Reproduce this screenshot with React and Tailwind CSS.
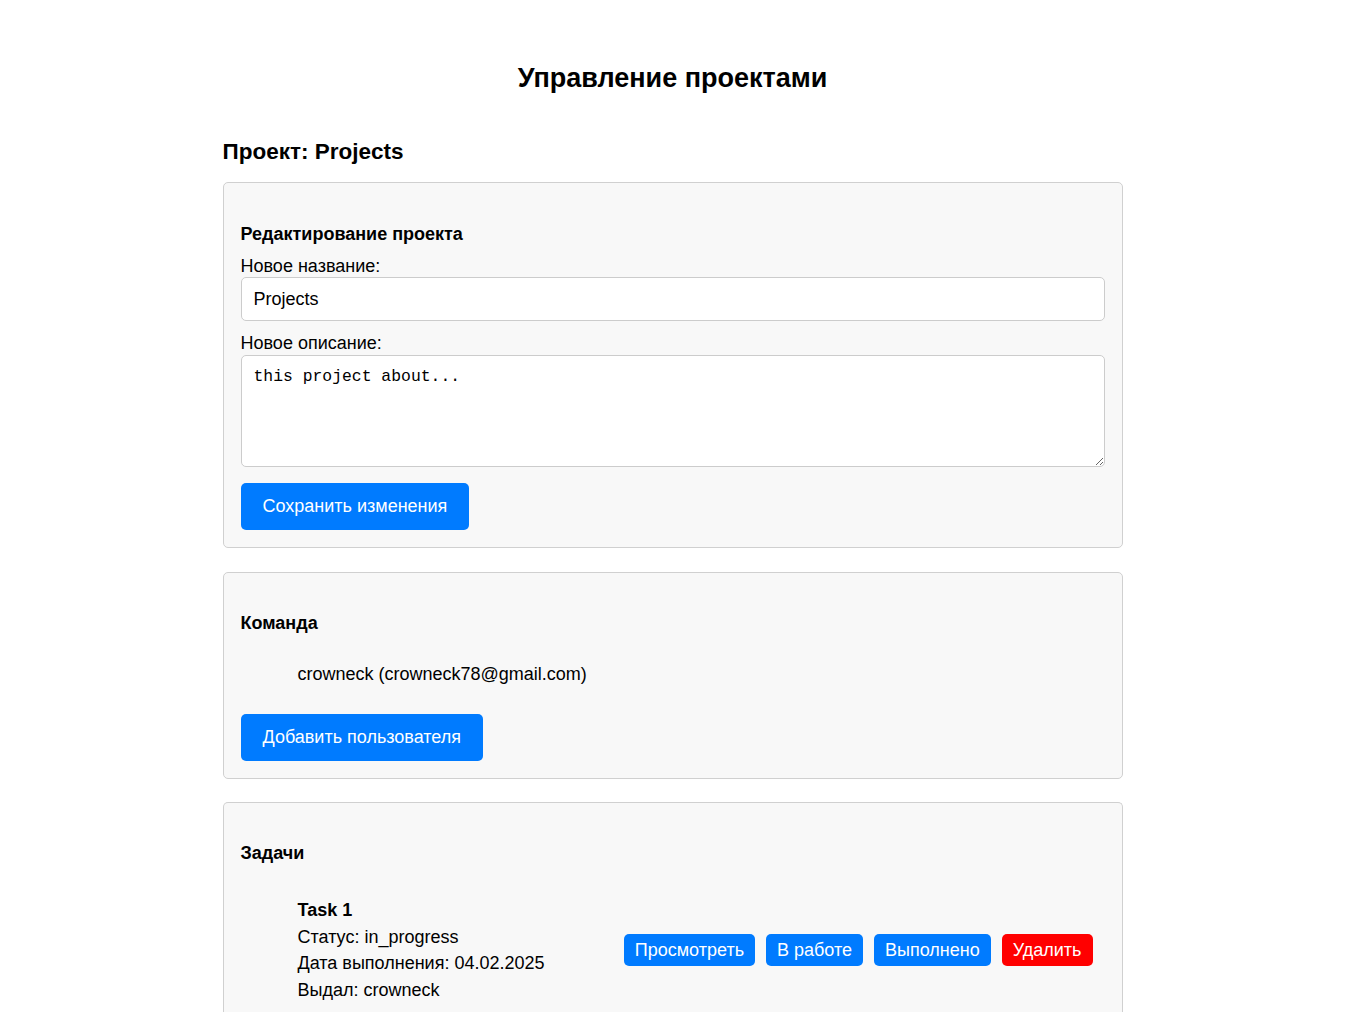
export default function App() {
  const btn = "bg-[#007bff] text-white rounded-[5px]";
  return (
    <div className="min-h-screen bg-white text-black font-['Liberation_Sans',Arial,sans-serif]">
      <div className="w-[900px] mx-auto pt-[62px]">
        <h1 className="text-center text-[27px] font-bold leading-[32px]">Управление проектами</h1>

        <h2 className="mt-[44px] text-[22.5px] font-bold leading-[28px]">Проект: Projects</h2>

        {/* Edit project */}
        <div className="mt-[16px] border border-[#d0d0d0] rounded-[5px] bg-[#f8f8f8] px-[17px] pt-[41px] pb-[17px]">
          <h3 className="text-[18px] font-bold leading-[20px]">Редактирование проекта</h3>
          <label className="block mt-[12px] text-[18px] leading-[20px]">Новое название:</label>
          <input
            className="block w-full mt-[1px] h-[44px] px-[12px] bg-white border border-[#cccccc] rounded-[5px] text-[18px] outline-none"
            defaultValue="Projects"
          />
          <label className="block mt-[12px] text-[18px] leading-[20px]">Новое описание:</label>
          <textarea
            className="block w-full mt-[2px] h-[112px] px-[12px] py-[11px] bg-white border border-[#cccccc] rounded-[5px] font-['Liberation_Mono',monospace] text-[16.4px] leading-[20px] outline-none"
            defaultValue="this project about..."
          />
          <button className={`${btn} mt-[16px] h-[47px] px-[22px] text-[18px]`}>Сохранить изменения</button>
        </div>

        {/* Team */}
        <div className="mt-[24px] border border-[#d0d0d0] rounded-[5px] bg-[#f8f8f8] px-[17px] pt-[40px] pb-[17px]">
          <h3 className="text-[18px] font-bold leading-[20px]">Команда</h3>
          <ul className="mt-[31px] pl-[57px]">
            <li className="text-[18px] leading-[20px]">crowneck (crowneck78@gmail.com)</li>
          </ul>
          <button className={`${btn} mt-[30px] h-[47px] px-[22px] text-[18px]`}>Добавить пользователя</button>
        </div>

        {/* Tasks */}
        <div className="mt-[23px] border border-[#d0d0d0] border-b-0 rounded-t-[5px] bg-[#f8f8f8] px-[17px] pt-[40px] pb-[40px]">
          <h3 className="text-[18px] font-bold leading-[20px]">Задачи</h3>
          <ul className="mt-[34px]">
            <li className="flex items-center justify-between pl-[57px] pr-[12px]">
              <div className="text-[18px] leading-[26.7px]">
                <div className="font-bold">Task 1</div>
                <div>Статус: in_progress</div>
                <div>Дата выполнения: 04.02.2025</div>
                <div>Выдал: crowneck</div>
              </div>
              <div className="flex gap-[11px]">
                <button className={`${btn} h-[32px] px-[11px] text-[18px]`}>Просмотреть</button>
                <button className={`${btn} h-[32px] px-[11px] text-[18px]`}>В работе</button>
                <button className={`${btn} h-[32px] px-[11px] text-[18px]`}>Выполнено</button>
                <button className="bg-[#ff0000] text-white rounded-[5px] h-[32px] px-[11px] text-[18px]">Удалить</button>
              </div>
            </li>
          </ul>
        </div>
      </div>
    </div>
  );
}
